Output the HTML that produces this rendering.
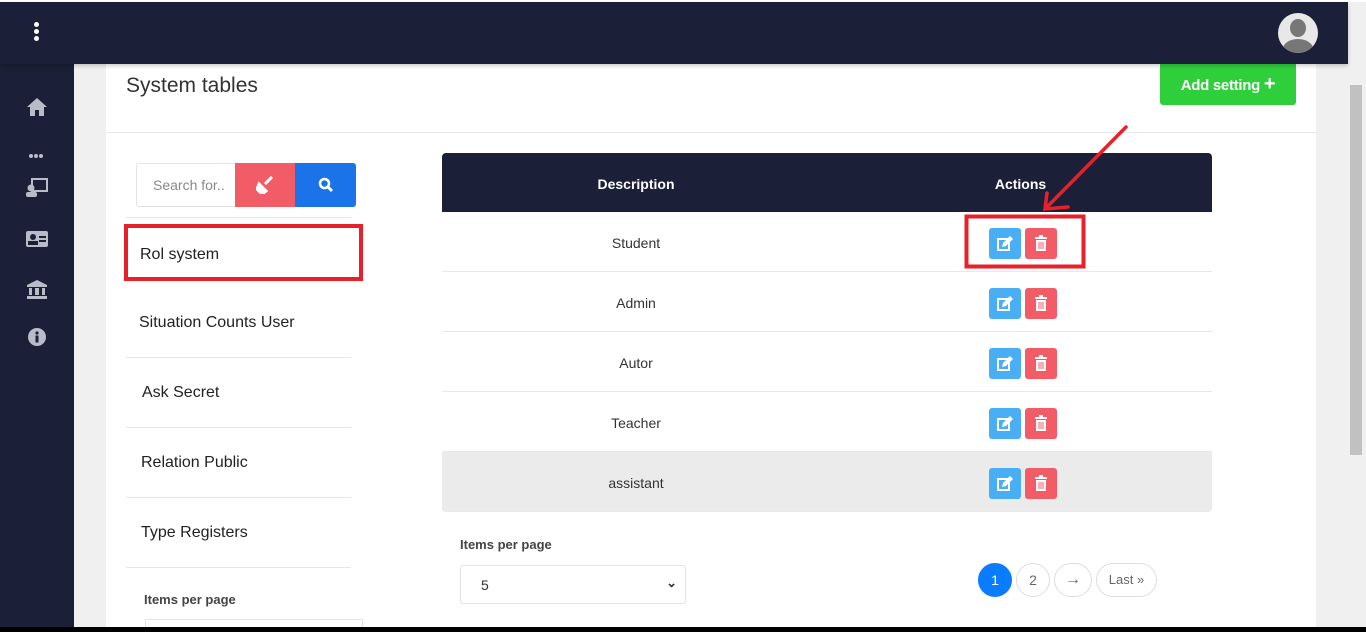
<!DOCTYPE html>
<html><head><style>
*{box-sizing:border-box;margin:0;padding:0}
body{width:1366px;height:632px;overflow:hidden;background:#fff;font-family:"Liberation Sans",sans-serif;position:relative}
.abs{position:absolute}
.top{left:0;top:2px;width:1348px;height:62px;background:#1b2038;box-shadow:0 2px 4px rgba(0,0,0,.2);z-index:3}
.side{left:0;top:64px;width:74px;height:563px;background:#1b2038}
.main{left:74px;top:64px;width:1274px;height:563px;background:#f0f0f0}
.card{left:106px;top:64px;width:1210px;height:563px;background:#fff}
.sb{left:1348px;top:2px;width:18px;height:625px;background:#f0f0f0}
.item{position:absolute;left:126px;width:225px;border-bottom:1px solid #e6e6e6;font-size:16px;color:#222}
.th{color:#fff;font-weight:bold;font-size:14px}
.row{position:absolute;left:442px;width:770px;height:60px;border-bottom:1px solid #e8e8e8;font-size:14px;color:#333}
.row .d{position:absolute;left:0;width:388px;text-align:center;top:23px}
.eb{position:absolute;left:547px;top:16px;width:32px;height:31px;background:#4aaef5;border-radius:3px}
.db{position:absolute;left:583px;top:16px;width:32px;height:31px;background:#f25c66;border-radius:3px}
.pg{position:absolute;top:563px;height:34px;border:1px solid #ddd;border-radius:17px;font-size:14px;color:#666;text-align:center;line-height:32px}
</style></head><body>
<div class="abs top">
 <div class="abs" style="left:34px;top:20px;width:5px;height:5px;border-radius:50%;background:#fff;box-shadow:0 7px 0 #fff,0 14px 0 #fff"></div>
 <div class="abs" style="left:1278px;top:11px;width:40px;height:40px;border-radius:50%;background:#e8e8e8;overflow:hidden">
  <div class="abs" style="left:12px;top:6px;width:16px;height:18px;border-radius:50%;background:#777"></div>
  <div class="abs" style="left:5px;top:26px;width:30px;height:20px;border-radius:50% 50% 0 0;background:#777"></div>
 </div>
</div>
<div class="abs side">
 <svg class="abs" style="left:26px;top:33px" width="22" height="20" viewBox="0 0 22 20"><path d="M11 1L1 10h3v9h5v-6h4v6h5v-9h3z" fill="#b8bcc8"/></svg>
 <div class="abs" style="left:29px;top:90px;width:4px;height:4px;border-radius:50%;background:#b8bcc8;box-shadow:5px 0 0 #b8bcc8,10px 0 0 #b8bcc8"></div>
 <svg class="abs" style="left:25px;top:114px" width="24" height="20"><rect x="7" y="1" width="15" height="12" fill="none" stroke="#b8bcc8" stroke-width="2"/><circle cx="6" cy="10" r="3.5" fill="#b8bcc8"/><rect x="1" y="14" width="11" height="5" rx="2" fill="#b8bcc8"/></svg>
 <svg class="abs" style="left:26px;top:167px" width="22" height="16"><rect width="22" height="16" rx="2" fill="#b8bcc8"/><circle cx="7" cy="6" r="3" fill="#1b2038"/><rect x="2" y="10" width="10" height="4" fill="#1b2038"/><rect x="13" y="5" width="7" height="2" fill="#1b2038"/><rect x="13" y="9" width="7" height="2" fill="#1b2038"/></svg>
 <svg class="abs" style="left:26px;top:215px" width="22" height="20"><path d="M11 1L1 6v2h20V6z M3 9h3v7H3z M9 9h4v7H9z M16 9h3v7h-3z M1 17h20v3H1z" fill="#b8bcc8"/></svg>
 <svg class="abs" style="left:27px;top:263px" width="20" height="20"><circle cx="10" cy="10" r="9" fill="#b8bcc8"/><rect x="8.5" y="8.5" width="3" height="7" fill="#1b2038"/><circle cx="10" cy="6" r="1.6" fill="#1b2038"/></svg>
</div>
<div class="abs main"></div>
<div class="abs card">
 <div class="abs" style="left:20px;top:10px;font-size:21px;color:#333">System tables</div>
 <div class="abs" style="left:0;top:68px;width:1210px;height:1px;background:#e8e8e8"></div>
 <div class="abs" style="left:1054px;top:0;width:136px;height:41px;background:#2ecf3a;border-radius:0 0 3px 3px;color:#fff;font-size:15px;font-weight:bold;text-align:center;line-height:40px;letter-spacing:-.3px">Add setting <span style="font-size:20px">+</span></div>
</div>
<div class="abs sb"><div class="abs" style="left:2px;top:83px;width:12px;height:370px;background:#c1c1c1"></div></div>

<div class="abs" style="left:136px;top:163px;width:100px;height:44px;border:1px solid #e3e3e3;border-radius:3px 0 0 3px;font-size:14px;color:#888;padding:13px 0 0 16px">Search for..</div>
<div class="abs" style="left:235px;top:163px;width:60px;height:44px;background:#f25c66"><svg class="abs" style="left:21px;top:13px" width="18" height="18"><path d="M16 1L9 8M3 8l7 7-4 3-5-5z" stroke="#fff" stroke-width="3" fill="#fff"/></svg></div>
<div class="abs" style="left:295px;top:163px;width:61px;height:44px;background:#1a73e8;border-radius:0 3px 3px 0"><svg class="abs" style="left:23px;top:14px" width="16" height="16"><circle cx="6.5" cy="6.5" r="4.5" fill="none" stroke="#fff" stroke-width="2.5"/><path d="M10 10l4 4" stroke="#fff" stroke-width="3"/></svg></div>
<div class="abs" style="left:126px;top:217px;width:225px;height:1px;background:#e6e6e6"></div>
<div class="abs" style="left:124px;top:224px;width:239px;height:57px;border:4px solid #e8202a"></div>
<div class="abs" style="left:140px;top:246px;font-size:16px;color:#222">Rol system</div>
<div class="item" style="top:288px;height:70px;padding:26px 0 0 13px">Situation Counts User</div>
<div class="item" style="top:358px;height:70px;padding:26px 0 0 16px">Ask Secret</div>
<div class="item" style="top:428px;height:70px;padding:26px 0 0 15px">Relation Public</div>
<div class="item" style="top:498px;height:70px;padding:26px 0 0 15px">Type Registers</div>
<div class="abs" style="left:144px;top:592px;font-size:13px;font-weight:bold;color:#444">Items per page</div>
<div class="abs" style="left:145px;top:619px;width:218px;height:8px;border:1px solid #e3e3e3;border-bottom:none"></div>

<div class="abs" style="left:442px;top:153px;width:770px;height:59px;background:#1b2038;border-radius:4px 4px 0 0">
 <div class="abs th" style="left:0;width:388px;text-align:center;top:23px">Description</div>
 <div class="abs th" style="left:500px;width:157px;text-align:center;top:23px">Actions</div>
</div>
<div class="row" style="top:212px"><div class="d">Student</div><div class="eb"></div><div class="db"></div></div>
<div class="row" style="top:272px"><div class="d">Admin</div><div class="eb"></div><div class="db"></div></div>
<div class="row" style="top:332px"><div class="d">Autor</div><div class="eb"></div><div class="db"></div></div>
<div class="row" style="top:392px"><div class="d">Teacher</div><div class="eb"></div><div class="db"></div></div>
<div class="row" style="top:452px;background:#ebebeb;border-radius:0 0 4px 4px"><div class="d">assistant</div><div class="eb"></div><div class="db"></div></div>
<svg class="abs" style="left:0;top:0;z-index:2" width="1366" height="632">
 <defs>
  <g id="ed"><rect x="-7" y="-5" width="11" height="11" fill="none" stroke="#fff" stroke-width="2"/><path d="M-3 3l1-4 7-7 3 3-7 7z" fill="#fff"/></g>
  <g id="tr"><rect x="-6" y="-7" width="12" height="2" fill="#fff"/><rect x="-2" y="-9" width="4" height="2" fill="#fff"/><path d="M-5-4h10v11h-10z" fill="#fff"/><path d="M-2-2v7M0-2v7M2-2v7" stroke="#f25c66" stroke-width="1"/></g>
 </defs>
 <use href="#ed" x="1005" y="244"/><use href="#tr" x="1041" y="244"/>
 <use href="#ed" x="1005" y="304"/><use href="#tr" x="1041" y="304"/>
 <use href="#ed" x="1005" y="364"/><use href="#tr" x="1041" y="364"/>
 <use href="#ed" x="1005" y="424"/><use href="#tr" x="1041" y="424"/>
 <use href="#ed" x="1005" y="484"/><use href="#tr" x="1041" y="484"/>
 <rect x="966.5" y="216.5" width="117" height="50" fill="none" stroke="#e8202a" stroke-width="4"/>
 <path d="M1126 127L1047 207M1047 193L1045 209L1068 207" stroke="#e8202a" stroke-width="3.5" fill="none" stroke-linecap="round"/>
</svg>
<div class="abs" style="left:460px;top:537px;font-size:13px;font-weight:bold;color:#444">Items per page</div>
<div class="abs" style="left:460px;top:565px;width:226px;height:39px;border:1px solid #e3e3e3;border-radius:3px;font-size:14px;color:#333;padding:11px 0 0 20px">5<span class="abs" style="right:8px;top:9px;font-size:13px;font-weight:bold">&#8964;</span></div>
<div class="pg" style="left:978px;width:34px;background:#0a7cff;border-color:#0a7cff;color:#fff">1</div>
<div class="pg" style="left:1016px;width:34px">2</div>
<div class="pg" style="left:1054px;width:38px;font-weight:bold;font-size:16px">&#8594;</div>
<div class="pg" style="left:1096px;width:61px;font-size:13px">Last »</div>
<div class="abs" style="left:0;top:627px;width:1366px;height:5px;background:#000;z-index:5"></div>
</body></html>
